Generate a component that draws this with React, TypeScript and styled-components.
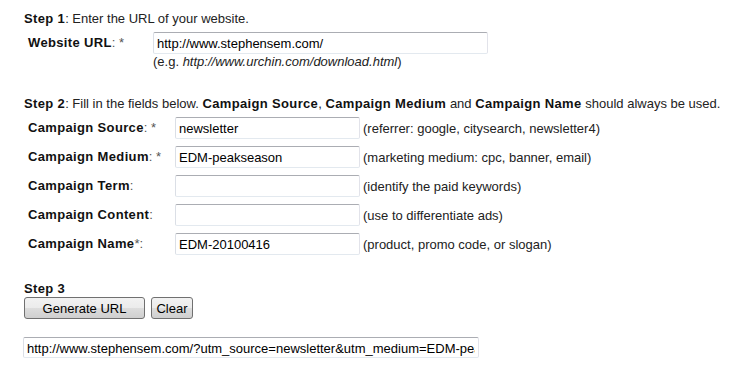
import React from "react";
import styled, { createGlobalStyle } from "styled-components";

const Global = createGlobalStyle`
  html, body { margin: 0; padding: 0; background: #fff; }
  body { font-family: Arial, "Liberation Sans", sans-serif; font-size: 13px; color: #222; }
  b { letter-spacing: 0.35px; }
`;

const Page = styled.div`
  padding: 11px 0 0 24px;
  width: 718px;
`;

const Line = styled.div<{ $mt?: number }>`
  height: 16px;
  line-height: 16px;
  margin-top: ${(p) => p.$mt ?? 0}px;
  white-space: nowrap;
  color: #222;
  b { color: #111; }
`;

const Row = styled.div<{ $labelW: number; $mt: number }>`
  display: grid;
  grid-template-columns: ${(p) => p.$labelW}px auto 1fr;
  align-items: center;
  margin-top: ${(p) => p.$mt}px;
  padding-left: 4px;
`;

const Label = styled.div`
  color: #222;
  white-space: nowrap;
  align-self: start;
  padding-top: 3px;
  line-height: 16px;
  b { color: #111; }
`;

const Req = styled.span`
  color: #555;
`;

const Input = styled.input<{ $w: number }>`
  box-sizing: border-box;
  width: ${(p) => p.$w}px;
  height: 22px;
  margin: 0;
  padding: 1px 3px 0;
  font-family: Arial, "Liberation Sans", sans-serif;
  font-size: 13px;
  color: #000;
  background: #fff;
  border: 1px solid #e2e3ea;
  border-top-color: #abadb3;
  border-left-color: #dbdfe6;
  border-bottom-color: #e3e9ef;
  border-radius: 2px;
  outline: none;
`;

const Hint = styled.div`
  padding-left: 3px;
  color: #222;
  white-space: nowrap;
`;

const Example = styled.div`
  margin-left: 129px;
  height: 16px;
  line-height: 16px;
  color: #222;
  i { color: #222; }
`;

const FieldList = styled.div`
  display: flex;
  flex-direction: column;
  gap: 7px;
  margin-top: 5px;
`;

const Buttons = styled.div`
  display: flex;
  gap: 6px;
  margin-top: 0;
`;

const Button = styled.button<{ $w: number }>`
  box-sizing: border-box;
  width: ${(p) => p.$w}px;
  height: 22px;
  margin: 0;
  padding: 0;
  font-family: Arial, "Liberation Sans", sans-serif;
  font-size: 13px;
  color: #000;
  border: 1px solid #707070;
  border-radius: 3px;
  background: linear-gradient(#f2f2f2 0%, #ebebeb 50%, #dddddd 51%, #cfcfcf 100%);
`;

const Result = styled(Input)`
  margin-top: 18px;
  margin-left: -1px;
  height: 21px;
`;

const fields = [
  { label: "Campaign Source", req: ": *", value: "newsletter", hint: "(referrer: google, citysearch, newsletter4)" },
  { label: "Campaign Medium", req: ": *", value: "EDM-peakseason", hint: "(marketing medium: cpc, banner, email)" },
  { label: "Campaign Term", req: ":", value: "", hint: "(identify the paid keywords)" },
  { label: "Campaign Content", req: ":", value: "", hint: "(use to differentiate ads)" },
  { label: "Campaign Name", req: "*:", value: "EDM-20100416", hint: "(product, promo code, or slogan)" },
];

export default function App() {
  return (
    <Page>
      <Global />
      <Line>
        <b>Step 1</b>: Enter the URL of your website.
      </Line>
      <Row $labelW={125} $mt={5}>
        <Label>
          <b>Website URL</b>
          <Req>: *</Req>
        </Label>
        <Input $w={335} defaultValue="http://www.stephensem.com/" readOnly />
        <span />
      </Row>
      <Example>
        (e.g. <i>http://www.urchin.com/download.html</i>)
      </Example>
      <Line $mt={26}>
        <b>Step 2</b>: Fill in the fields below. <b>Campaign Source</b>, <b>Campaign Medium</b> and{" "}
        <b>Campaign Name</b> should always be used.
      </Line>
      <FieldList>
        {fields.map((f) => (
          <Row key={f.label} $labelW={147} $mt={0}>
            <Label>
              <b>{f.label}</b>
              <Req>{f.req}</Req>
            </Label>
            <Input $w={185} defaultValue={f.value} readOnly />
            <Hint>{f.hint}</Hint>
          </Row>
        ))}
      </FieldList>
      <Line $mt={26}>
        <b>Step 3</b>
      </Line>
      <Buttons>
        <Button $w={121}>Generate URL</Button>
        <Button $w={42}>Clear</Button>
      </Buttons>
      <Result
        $w={456}
        defaultValue="http://www.stephensem.com/?utm_source=newsletter&utm_medium=EDM-peakseason&utm_campaign=EDM-20100416"
        readOnly
      />
    </Page>
  );
}
